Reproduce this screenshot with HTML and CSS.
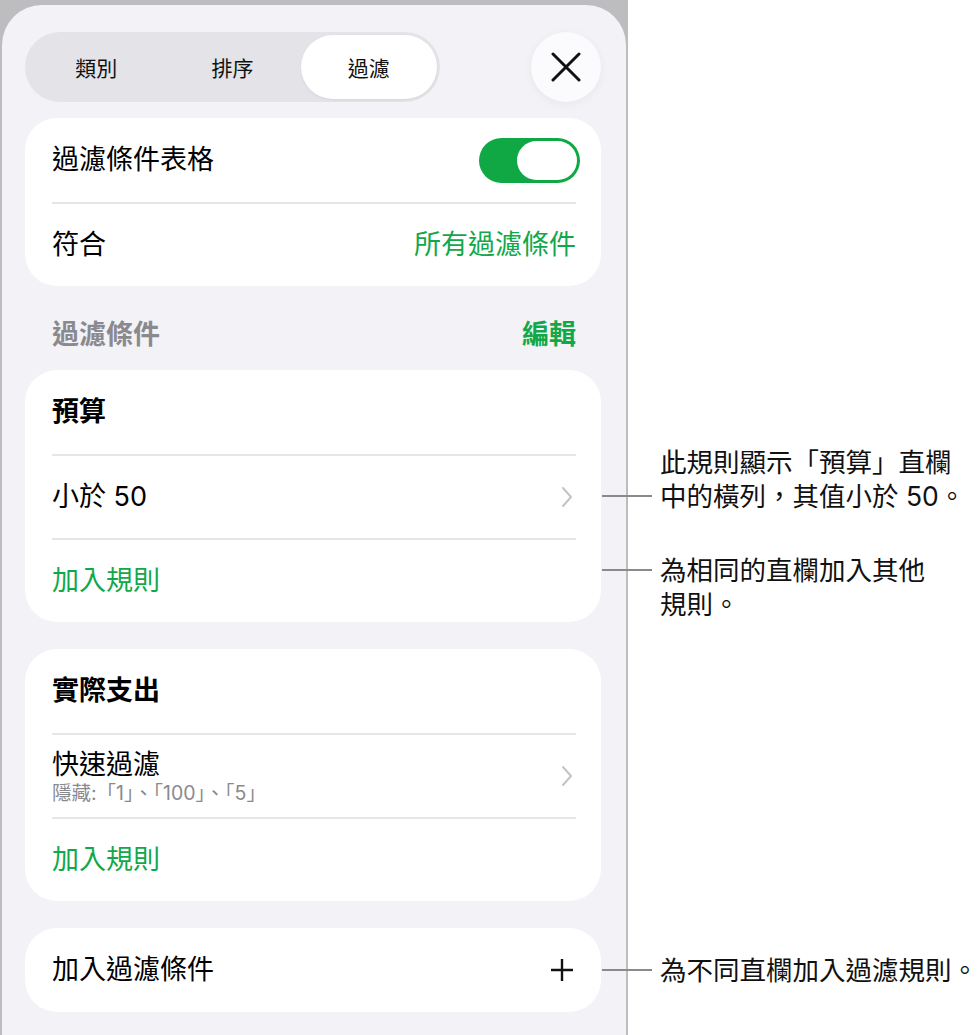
FILE: index.html
```html
<!DOCTYPE html>
<html lang="zh-Hant">
<head>
  <meta charset="utf-8">
  <title>過濾</title>
  <link rel="stylesheet" href="styles.css">
</head>
<body>
  <div class="page">
    <div class="frame">
      <div class="sheet">
        <div class="topbar">
          <div class="segmented">
            <span class="seg">類別</span>
            <span class="seg">排序</span>
            <span class="seg active">過濾</span>
          </div>
          <button class="close" aria-label="關閉">
            <svg width="30" height="30" viewBox="0 0 30 30">
              <path d="M2 2 L28 28 M28 2 L2 28" stroke="#111" stroke-width="3" stroke-linecap="round" fill="none"/>
            </svg>
          </button>
        </div>

        <div class="card first">
          <div class="row">
            <span>過濾條件表格</span>
            <span class="toggle"><span class="knob"></span></span>
          </div>
          <div class="row">
            <span>符合</span>
            <span class="green">所有過濾條件</span>
          </div>
        </div>

        <div class="section-head">
          <span>過濾條件</span>
          <span class="edit">編輯</span>
        </div>

        <div class="card">
          <div class="row heading">預算</div>
          <div class="row">
            <span>小於 50</span>
            <svg class="chevron" width="14" height="24" viewBox="0 0 14 24">
              <path d="M3 3 L11 12 L3 21" stroke="#c4c4c8" stroke-width="2" fill="none" stroke-linecap="round" stroke-linejoin="round"/>
            </svg>
          </div>
          <div class="row green">加入規則</div>
        </div>

        <div class="card">
          <div class="row heading">實際支出</div>
          <div class="row">
            <div class="stack">
              <span>快速過濾</span>
              <span class="sub">隱藏:「1」、「100」、「5」</span>
            </div>
            <svg class="chevron" width="14" height="24" viewBox="0 0 14 24">
              <path d="M3 3 L11 12 L3 21" stroke="#c4c4c8" stroke-width="2" fill="none" stroke-linecap="round" stroke-linejoin="round"/>
            </svg>
          </div>
          <div class="row green">加入規則</div>
        </div>

        <div class="card">
          <div class="row">
            <span>加入過濾條件</span>
            <svg class="plus" width="24" height="24" viewBox="0 0 24 24">
              <path d="M12 1 V23 M1 12 H23" stroke="#111" stroke-width="2.4" fill="none"/>
            </svg>
          </div>
        </div>
      </div>
    </div>

    <!-- annotations beside the sheet -->
    <div class="note note-rule">
      <span class="leader low"></span>
      <p>此規則顯示「預算」直欄<br>中的橫列，其值小於 50。</p>
    </div>
    <div class="note note-add">
      <span class="leader"></span>
      <p>為相同的直欄加入其他<br>規則。</p>
    </div>
    <div class="note note-filter">
      <span class="leader"></span>
      <p>為不同直欄加入過濾規則。</p>
    </div>
  </div>
</body>
</html>
```

FILE: styles.css
```css
body {
  margin: 0;
  background: #fff;
  font-family: "Inter", "Noto Sans CJK TC", sans-serif;
  color: #000;
}
.page {
  position: relative;
  width: 979px;
  height: 1035px;
  overflow: hidden;
}
.frame {
  width: 628px;
  height: 1035px;
  box-sizing: border-box;
  padding: 5px 2px 0 2px;
  background: #bdbdbf;
}
.sheet {
  height: 100%;
  box-sizing: border-box;
  padding: 27px 25px 0 23px;
  background: #f2f2f7;
  border-radius: 40px 40px 0 0;
}

/* top bar */
.topbar {
  display: flex;
  justify-content: space-between;
  align-items: center;
}
.segmented {
  display: flex;
  width: 415px;
  height: 70px;
  box-sizing: border-box;
  padding: 3px;
  background: #e3e3e8;
  border-radius: 35px;
}
.seg {
  flex: 1;
  display: flex;
  align-items: center;
  justify-content: center;
  font-size: 21px;
  font-weight: 400;
  color: #111;
}
.seg.active {
  background: #fff;
  border-radius: 32px;
  box-shadow: 0 1px 3px rgba(0,0,0,0.06);
}
.close {
  width: 70px;
  height: 70px;
  border: none;
  padding: 0;
  border-radius: 50%;
  background: #fbfbfd;
  box-shadow: 0 2px 10px rgba(0,0,0,0.05);
  display: flex;
  align-items: center;
  justify-content: center;
}

/* grouped cards */
.card {
  background: #fff;
  border-radius: 32px;
  padding: 0 25px 0 27px;
  margin-bottom: 27px;
}
.card.first { margin-top: 16px; margin-bottom: 0; }
.row {
  height: 84px;
  box-sizing: border-box;
  display: flex;
  align-items: center;
  justify-content: space-between;
  font-size: 27px;
  line-height: 32px;
}
.row + .row { border-top: 2px solid #e5e5ea; }
.row.heading { font-weight: 700; }
.green { color: #12a84a; }
.stack {
  display: flex;
  flex-direction: column;
  padding-top: 2px;
}
.sub {
  font-size: 19.5px;
  line-height: 24px;
  color: #8a8a8e;
}
.chevron { margin-right: 2px; }
.plus { margin-right: 2px; }

.toggle {
  position: relative;
  width: 101px;
  height: 45px;
  margin-right: -4px;
  border-radius: 23px;
  background: #0fa845;
}
.toggle .knob {
  position: absolute;
  right: 3px;
  top: 3px;
  width: 60px;
  height: 39px;
  border-radius: 20px;
  background: #fff;
}

.section-head {
  display: flex;
  justify-content: space-between;
  padding: 34px 25px 20px 27px;
  font-size: 27px;
  line-height: 30px;
  font-weight: 700;
  color: #8a8a8e;
}
.section-head .edit { color: #12a84a; }

/* annotations */
.note {
  position: absolute;
  left: 602px;
  display: flex;
  align-items: flex-start;
}
.note p {
  margin: 0 0 0 8px;
  font-size: 26.5px;
  line-height: 34px;
  color: #111;
}
.leader {
  width: 50px;
  height: 2px;
  margin-top: 16px;
  background: #8a8a8a;
}
.leader.low { margin-top: 50px; }
.note-rule { top: 445px; }
.note-add { top: 553px; }
.note-filter { top: 953px; }
```
